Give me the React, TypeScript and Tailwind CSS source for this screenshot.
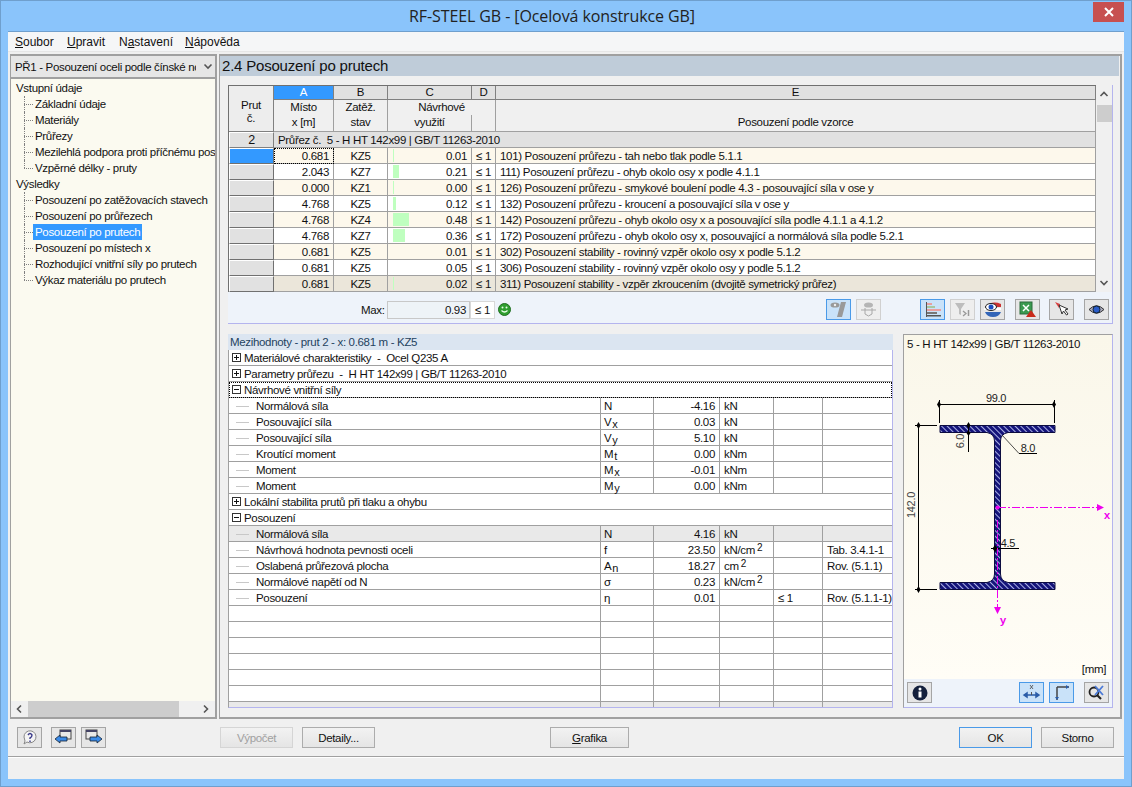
import type { ReactNode } from "react";

const font = "font-['Liberation_Sans',Arial,sans-serif]";

const treeInput = ["Základní údaje", "Materiály", "Průřezy", "Mezilehlá podpora proti příčnému posunu", "Vzpěrné délky - pruty"];
const treeResults = [
  "Posouzení po zatěžovacích stavech",
  "Posouzení po průřezech",
  "Posouzení po prutech",
  "Posouzení po místech x",
  "Rozhodující vnitřní síly po prutech",
  "Výkaz materiálu po prutech",
];

const rows = [
  { x: "0.681", lc: "KZ5", v: "0.01", bar: 1, text: "101) Posouzení průřezu - tah nebo tlak podle 5.1.1" },
  { x: "2.043", lc: "KZ7", v: "0.21", bar: 6, text: "111) Posouzení průřezu - ohyb okolo osy x podle 4.1.1" },
  { x: "0.000", lc: "KZ1", v: "0.00", bar: 1, text: "126) Posouzení průřezu - smykové boulení podle 4.3 - posouvající síla v ose y" },
  { x: "4.768", lc: "KZ5", v: "0.12", bar: 3, text: "132) Posouzení průřezu - kroucení a posouvající síla v ose y" },
  { x: "4.768", lc: "KZ4", v: "0.48", bar: 16, text: "142) Posouzení průřezu - ohyb okolo osy x a posouvající síla podle 4.1.1 a 4.1.2" },
  { x: "4.768", lc: "KZ7", v: "0.36", bar: 12, text: "172) Posouzení průřezu - ohyb okolo osy x, posouvající a normálová síla podle 5.2.1" },
  { x: "0.681", lc: "KZ5", v: "0.01", bar: 0, text: "302) Posouzení stability - rovinný vzpěr okolo osy x podle 5.1.2" },
  { x: "0.681", lc: "KZ5", v: "0.05", bar: 0, text: "306) Posouzení stability - rovinný vzpěr okolo osy y podle 5.1.2" },
  { x: "0.681", lc: "KZ5", v: "0.02", bar: 1, text: "311) Posouzení stability - vzpěr zkroucením (dvojitě symetrický průřez)" },
];

const rowBg = ["bg-[#fdf8ec]", "bg-white", "bg-[#fdf8ec]", "bg-white", "bg-[#fdf8ec]", "bg-white", "bg-[#fdf8ec]", "bg-white", "bg-[#ebe6da]"];

const grid1 = "grid h-4 grid-cols-[45px_60px_54px_84px_24px_600px] grid-rows-[16px] leading-4";
const grid2 = "grid grid-cols-[372px_53px_66px_54px_49px_69px] grid-rows-[15px]";

type Detail =
  | { kind: "group"; open: boolean; label: string; focus?: boolean }
  | { kind: "row"; label: string; sym?: ReactNode; val?: string; unit?: ReactNode; le?: string; ref?: string; shade?: boolean }
  | { kind: "empty"; shade?: boolean };

const S = ({ a, b }: { a: string; b: string }) => (
  <span>
    {a}
    <span className="relative top-[2px] ml-[1px] text-[11px] leading-none">{b}</span>
  </span>
);
const Sq = ({ a }: { a: string }) => (
  <span>
    {a}
    <span className="relative top-[-3px] ml-[2px] text-[10px] leading-none">2</span>
  </span>
);

const details: Detail[] = [
  { kind: "group", open: false, label: "Materiálové charakteristiky  -  Ocel Q235 A" },
  { kind: "group", open: false, label: "Parametry průřezu  -  H HT 142x99 | GB/T 11263-2010" },
  { kind: "group", open: true, label: "Návrhové vnitřní síly", focus: true },
  { kind: "row", label: "Normálová síla", sym: "N", val: "-4.16", unit: "kN" },
  { kind: "row", label: "Posouvající síla", sym: <S a="V" b="x" />, val: "0.03", unit: "kN" },
  { kind: "row", label: "Posouvající síla", sym: <S a="V" b="y" />, val: "5.10", unit: "kN" },
  { kind: "row", label: "Kroutící moment", sym: <S a="M" b="t" />, val: "0.00", unit: "kNm" },
  { kind: "row", label: "Moment", sym: <S a="M" b="x" />, val: "-0.01", unit: "kNm" },
  { kind: "row", label: "Moment", sym: <S a="M" b="y" />, val: "0.00", unit: "kNm" },
  { kind: "group", open: false, label: "Lokální stabilita prutů při tlaku a ohybu" },
  { kind: "group", open: true, label: "Posouzení" },
  { kind: "row", label: "Normálová síla", sym: "N", val: "4.16", unit: "kN", shade: true },
  { kind: "row", label: "Návrhová hodnota pevnosti oceli", sym: "f", val: "23.50", unit: <Sq a="kN/cm" />, ref: "Tab. 3.4.1-1" },
  { kind: "row", label: "Oslabená průřezová plocha", sym: <S a="A" b="n" />, val: "18.27", unit: <Sq a="cm" />, ref: "Rov. (5.1.1)" },
  { kind: "row", label: "Normálové napětí od N", sym: "σ", val: "0.23", unit: <Sq a="kN/cm" /> },
  { kind: "row", label: "Posouzení", sym: "η", val: "0.01", le: "≤ 1", ref: "Rov. (5.1.1-1)" },
  { kind: "empty" },
  { kind: "empty" },
  { kind: "empty" },
  { kind: "empty" },
  { kind: "empty" },
  { kind: "empty" },
  { kind: "empty", shade: true },
];

const Dots = ({ last }: { last?: boolean }) => (
  <span className="ml-[13px] flex h-4 w-[9px] shrink-0 flex-col">
    <span className="h-2 w-0 border-l border-dotted border-[#808080]" />
    <span className="w-[9px] border-t border-dotted border-[#808080]" />
    {!last && <span className="h-2 w-0 border-l border-dotted border-[#808080]" />}
  </span>
);

function Tool({ active, disabled, children, className = "" }: { active?: boolean; disabled?: boolean; children: ReactNode; className?: string }) {
  const tone = active ? "border-[#4a9ae8] bg-[#c9e2f9]" : disabled ? "border-[#d0d0d0] bg-[#eeeeee]" : "border-[#a5a5a5] bg-[#e6e6e6]";
  return <div className={`flex h-[21px] w-[25px] shrink-0 items-center justify-center border ${tone} ${className}`}>{children}</div>;
}

function Button({ children, className = "", disabled, active }: { children: ReactNode; className?: string; disabled?: boolean; active?: boolean }) {
  return (
    <div
      className={`flex h-[21px] shrink-0 items-center justify-center border bg-gradient-to-b from-[#f2f2f2] to-[#e5e5e5] ${
        disabled ? "border-[#d5d5d5] text-[#a0a0a0]" : active ? "border-[#4a9ae8]" : "border-[#acacac]"
      } ${className}`}
    >
      {children}
    </div>
  );
}

const PlusBox = ({ open }: { open: boolean }) => (
  <svg width="9" height="9" viewBox="0 0 9 9" className="mt-[3px] mr-[3px] ml-[3px] shrink-0">
    <rect x="0.5" y="0.5" width="8" height="8" fill="#fff" stroke="#333" />
    <path d={open ? "M2 4.5h5" : "M2 4.5h5M4.5 2v5"} stroke="#111" />
  </svg>
);

function IBeam() {
  const section =
    "M940 425.5H1055V432.5H1008Q1000.5 434 1000.5 441V574Q1000.5 581 1008 582.5H1055V589.5H940V582.5H987Q994.5 581 994.5 574V441Q994.5 434 987 432.5H940Z";
  return (
    <svg viewBox="904 352 208 309" className="h-[309px] w-[208px] shrink-0">
      <defs>
        <pattern id="hatch" width="4" height="4" patternUnits="userSpaceOnUse" patternTransform="rotate(-45)">
          <rect width="4" height="4" fill="#14147a" />
          <rect width="1" height="4" fill="#aab0e4" />
        </pattern>
      </defs>
      <path d={section} fill="url(#hatch)" stroke="#0c0c40" strokeWidth="1" />
      <g stroke="#000" strokeWidth="1" fill="none" shapeRendering="crispEdges">
        <path d="M939 404.5H1054M939 400V423M1054 400V423" />
        <path d="M918.5 425V590M915 425.5H937M915 589.5H937" />
        <path d="M968.5 423V452" />
        <path d="M1019 453.5H1037" />
        <path d="M991 548.5H1019" />
      </g>
      <path d="M1002 435L1019 453.5" stroke="#222" strokeWidth="0.8" />
      <g fill="#000">
        <path d="M939 401l2 3.5-2 3.5-2-3.5zM1054 401l2 3.5-2 3.5-2-3.5zM918.5 422l2 3.5-2 3.5-2-3.5zM918.5 586l2 3.5-2 3.5-2-3.5zM968.5 422l2 3.5-2 3.5-2-3.5zM968.5 430l2 3-2 3-2-3zM995 545l2.5 3.5-2.5 3.5-2.5-3.5z" />
      </g>
      <g fontFamily="'Liberation Sans',Arial,sans-serif" fontSize="11" letterSpacing="-0.3" fill="#1b1b1b">
        <text x="996" y="402" textAnchor="middle">99.0</text>
        <text x="1028" y="452" textAnchor="middle">8.0</text>
        <text x="1008" y="547" textAnchor="middle">4.5</text>
        <text transform="translate(964 441) rotate(-90)" textAnchor="middle" fill="#444">6.0</text>
        <text transform="translate(915 505) rotate(-90)" textAnchor="middle" fill="#444">142.0</text>
      </g>
      <g stroke="#ee00ee" strokeWidth="1" fill="none">
        <path d="M998 507.5H1098" strokeDasharray="8 2 2 2" />
        <path d="M997.5 520V612" strokeDasharray="8 2 2 2" />
      </g>
      <g fill="#ee00ee">
        <circle cx="997.5" cy="507.5" r="2" />
        <path d="M1097 504l7 3.5-7 3.5zM994 607h7l-3.5 7z" />
        <text x="1107" y="519" textAnchor="middle" fontFamily="'Liberation Mono',monospace" fontWeight="700" fontSize="11">x</text>
        <text x="1003" y="624" textAnchor="middle" fontFamily="'Liberation Mono',monospace" fontWeight="700" fontSize="11">y</text>
      </g>
    </svg>
  );
}

export default function App() {
  return (
    <div className={`${font} flex h-[787px] w-[1132px] flex-col overflow-hidden border border-[#6f9fcd] bg-[#8ac4fb] text-[11.5px] leading-4 tracking-[-0.33px] text-[#111]`}>
      {/* title bar */}
      <div className="flex h-[30px] shrink-0 items-center">
        <div className="flex-1 pl-[10px] text-center font-['Open_Sans',sans-serif] text-[16px] tracking-[-0.1px] text-[#222]">RF-STEEL GB - [Ocelová konstrukce GB]</div>
        <div className="mr-[7px] mb-[9px] flex h-[20px] w-[31px] items-center justify-center bg-[#c75050]">
          <svg width="10" height="10" viewBox="0 0 10 10">
            <path d="M1 1l8 8M9 1l-8 8" stroke="#fff" strokeWidth="2" />
          </svg>
        </div>
      </div>

      <div className="mx-[7px] flex h-[748px] flex-col border-t border-[#6f9fcd] bg-[#f0f0f0]">
        {/* menu */}
        <div className="flex h-[19px] shrink-0 items-center gap-[14px] bg-[#f5f6f7] pl-[7px] text-[12px] tracking-normal">
          <span className="w-[38px]"><u>S</u>oubor</span>
          <span className="w-[38px]"><u>U</u>pravit</span>
          <span className="w-[52px]">N<u>a</u>stavení</span>
          <span><u>N</u>ápověda</span>
        </div>

        <div className="flex h-[668px] shrink-0 border-t border-[#e6e6e6] pt-[2px]">
          {/* left panel */}
          <div className="ml-[2px] flex w-[207px] shrink-0 flex-col border-t-2 border-r-2 border-b-2 border-l border-[#a0a0a0]">
            <div className="flex h-[23px] shrink-0 items-center justify-between border-b-2 border-[#a0a0a0] bg-[#e6e6e6] pr-[2px] pl-[4px]">
              <span className="w-[181px] overflow-hidden whitespace-nowrap">PŘ1 - Posouzení oceli podle čínské normy</span>
              <svg width="10" height="8" viewBox="0 0 10 8"><path d="M1.5 1.5L5 5l3.500-3.500" stroke="#555" strokeWidth="1.6" fill="none" /></svg>
            </div>
            <div className="flex-1 overflow-hidden bg-[#fbfaf0] pt-[1px]">
              <div className="pl-[5px]">Vstupní údaje</div>
              {treeInput.map((t, i) => (
                <div key={t} className="flex h-4 whitespace-nowrap">
                  <Dots last={i === treeInput.length - 1} />
                  <span className="px-[2px]">{t}</span>
                </div>
              ))}
              <div className="pl-[5px]">Výsledky</div>
              {treeResults.map((t, i) => (
                <div key={t} className="flex h-4 whitespace-nowrap">
                  <Dots last={i === treeResults.length - 1} />
                  <span className={`px-[2px] ${t === "Posouzení po prutech" ? "bg-[#3399ff] text-white" : ""}`}>{t}</span>
                </div>
              ))}
            </div>
            <div className="flex h-[16px] shrink-0 items-center bg-[#f0f0f0]">
              <svg width="17" height="10" viewBox="0 0 17 10"><path d="M10 1.5L6.500 5l3.500 3.500" stroke="#555" strokeWidth="1.6" fill="none" /></svg>
              <div className="h-full w-[151px] bg-[#cdcdcd]" />
              <svg width="17" height="10" viewBox="0 0 17 10" className="mr-[1px] ml-auto"><path d="M7 1.5L10.500 5 7 8.500" stroke="#555" strokeWidth="1.6" fill="none" /></svg>
            </div>
          </div>

          {/* right panel */}
          <div className="ml-[2px] flex w-[903px] shrink-0 flex-col border-t-2 border-r-2 border-b-2 border-l border-[#a0a0a0] bg-[#f0f0f0]">
            <div className="mr-[1px] h-[20px] shrink-0 bg-[#bfccd9] pl-[2px] text-[15px] leading-5 tracking-[-0.2px]">2.4 Posouzení po prutech</div>

            <div className="mt-[9px] ml-[8px] flex w-[885px] shrink-0 flex-col border-r border-b border-[#b4b4ee]">
              <div className="flex">
                {/* upper table */}
                <div className="w-[868px] shrink-0 border-t border-l border-[#707070]">
                  <div className="grid grid-cols-[45px_60px_54px_84px_24px_600px]">
                    <div className="row-span-2 flex flex-col items-center border-r border-b border-[#808080] bg-[#ededed] pt-[13px] leading-[13px]">
                      <span>Prut</span>
                      <span>č.</span>
                    </div>
                    {["A", "B", "C", "D", "E"].map((c) => (
                      <div key={c} className={`h-[14px] border-r border-b border-[#808080] text-center leading-[13px] ${c === "A" ? "bg-[#3399ff] text-white" : "bg-[#e1e1e1]"}`}>
                        {c}
                      </div>
                    ))}
                    <div className="h-[32px] border-r border-b border-[#a0a0a0] bg-[#f0f0f0] text-center leading-[15px]">Místo<br />x [m]</div>
                    <div className="border-r border-b border-[#a0a0a0] bg-[#f0f0f0] text-center leading-[15px]">Zatěž.<br />stav</div>
                    <div className="col-span-2 flex flex-col border-r border-b border-[#a0a0a0] bg-[#f0f0f0] leading-[15px]">
                      <div className="text-center">Návrhové</div>
                      <div className="h-4 w-[84px] border-r border-[#a0a0a0] text-center">využití</div>
                    </div>
                    <div className="border-r border-b border-[#a0a0a0] bg-[#f0f0f0] pt-[15px] text-center leading-[15px]">Posouzení podle vzorce</div>
                  </div>
                  <div className={grid1}>
                    <div className="flex items-center justify-center border border-t-white border-r-[#808080] border-b-[#808080] border-l-white bg-[#e1e1e1] text-[12.5px]">2</div>
                    <div className="col-span-5 border-r border-b border-[#a0a0a0] bg-[#e1e1e1] pl-[4px] whitespace-pre">Průřez č.  5 - H HT 142x99 | GB/T 11263-2010</div>
                  </div>
                  {rows.map((r, i) => (
                    <div key={r.text} className={grid1}>
                      <div className={`border border-t-white border-r-[#707070] border-b-[#707070] border-l-white ${i === 0 ? "bg-[#3399ff]" : "bg-[#e1e1e1]"}`} />
                      <div className={`border-r border-b border-[#a0a0a0] pr-[4px] text-right ${rowBg[i]} ${i === 0 ? "outline-1 -outline-offset-1 outline-black outline-dotted" : ""}`}>{r.x}</div>
                      <div className={`border-r border-b border-[#a0a0a0] text-center ${rowBg[i]}`}>{r.lc}</div>
                      <div className={`flex items-stretch justify-between border-r border-b border-[#a0a0a0] pr-[4px] pl-[5px] ${rowBg[i]}`}>
                        <span className="my-[1px] bg-[#bfffbf]" style={{ width: r.bar }} />
                        <span>{r.v}</span>
                      </div>
                      <div className={`border-r border-b border-[#a0a0a0] text-center ${rowBg[i]}`}>≤ 1</div>
                      <div className={`overflow-hidden border-r border-b border-[#a0a0a0] pl-[4px] whitespace-nowrap ${rowBg[i]}`}>{r.text}</div>
                    </div>
                  ))}
                </div>
                {/* scrollbar */}
                <div className="flex h-[207px] w-[16px] shrink-0 flex-col items-center">
                  <svg width="10" height="14" viewBox="0 0 10 14" className="mt-[2px]"><path d="M1.5 9L5 5.5 8.500 9" stroke="#555" strokeWidth="1.6" fill="none" /></svg>
                  <div className="mt-[4px] h-[17px] w-[15px] bg-[#cdcdcd]" />
                  <div className="flex-1" />
                  <svg width="10" height="10" viewBox="0 0 10 10" className="mb-[4px]"><path d="M1.5 3L5 6.500 8.500 3" stroke="#555" strokeWidth="1.6" fill="none" /></svg>
                </div>
              </div>

              {/* max row */}
              <div className="flex h-[31px] items-center bg-[#eef3fa] pt-[4px]">
                <span className="ml-[133px] w-[26px]">Max:</span>
                <div className="h-[18px] w-[83px] border border-[#c8c8c8] bg-[#eef3f7] pr-[3px] text-right">0.93</div>
                <div className="h-[18px] w-[25px] border border-[#d8d8d8] bg-white text-center">≤ 1</div>
                <svg width="13" height="13" viewBox="0 0 13 13" className="ml-[3px] shrink-0">
                  <circle cx="6.500" cy="6.500" r="6" fill="#2f9e2f" stroke="#1f6e1f" />
                  <path d="M3.500 7.500q3 3 6 0" stroke="#e8ffe8" strokeWidth="1.2" fill="none" />
                  <circle cx="4.500" cy="4.500" r="1" fill="#e8ffe8" />
                  <circle cx="8.500" cy="4.500" r="1" fill="#e8ffe8" />
                </svg>
                <Tool active className="ml-[315px]">
                  <svg width="19" height="17" viewBox="0 0 19 17"><ellipse cx="6" cy="4" rx="4.500" ry="2.600" fill="#999" /><circle cx="6" cy="4" r="1.200" fill="#eee" /><path d="M12 1h5l-4 15H8z" fill="#999" /></svg>
                </Tool>
                <Tool disabled className="ml-[5px]">
                  <svg width="19" height="17" viewBox="0 0 19 17"><ellipse cx="9.500" cy="4" rx="4.500" ry="2.600" fill="#b5b5b5" /><path d="M2 9h15M6 7v6M13 7v6M6 13l3.500 2 3.500-2" stroke="#a8a8a8" fill="none" /></svg>
                </Tool>
                <Tool active className="ml-[39px]">
                  <svg width="19" height="17" viewBox="0 0 19 17"><path d="M3.500 1v15" stroke="#555" /><rect x="4" y="2" width="5" height="2" fill="#e8a0a0" /><rect x="4" y="5" width="8" height="2" fill="#a8c8a0" /><rect x="4" y="8" width="14" height="2" fill="#e8a0a0" /><rect x="4" y="11" width="10" height="2" fill="#777" /><rect x="4" y="14" width="14" height="1.500" fill="#555" /></svg>
                </Tool>
                <Tool disabled className="ml-[5px]">
                  <svg width="19" height="17" viewBox="0 0 19 17"><path d="M2 2h10L8 8v6L6 13V8z" fill="#bdbdbd" /><path d="M10 10l3 2.500-3 2.500" stroke="#999" fill="none" strokeWidth="1.300" /><path d="M15.500 9v6" stroke="#999" strokeWidth="1.500" /></svg>
                </Tool>
                <Tool className="ml-[5px]">
                  <svg width="19" height="17" viewBox="0 0 19 17"><path d="M2 6q7-7 16-3v3H2z" fill="#c33" /><path d="M1 7h17v2H1z" fill="#fff" /><path d="M2 11h16q-2 5-8 5t-8-5z" fill="#3265b8" /><ellipse cx="8" cy="6" rx="5.500" ry="3.500" fill="#fff" stroke="#222" /><circle cx="8" cy="6" r="2.500" fill="#1a4fc0" /></svg>
                </Tool>
                <Tool className="ml-[10px]">
                  <svg width="19" height="17" viewBox="0 0 19 17"><rect x="2" y="1" width="12" height="12" fill="#3a9a50" stroke="#2a6a3a" /><path d="M5 4l6 6M11 4l-6 6" stroke="#fff" strokeWidth="1.500" /><path d="M13 9l5 7H8z" fill="#c92a1a" /></svg>
                </Tool>
                <Tool className="ml-[9px]">
                  <svg width="19" height="17" viewBox="0 0 19 17"><path d="M3 1l5 2-1 4z" fill="#d94040" /><path d="M7 4l3 9 1.500-3 3 4 1.500-1-3-4 3-1z" fill="#fff" stroke="#333" /></svg>
                </Tool>
                <Tool className="ml-[10px]">
                  <svg width="19" height="17" viewBox="0 0 19 17"><path d="M2 8.500Q9.500 1 17 8.500 9.500 16 2 8.500z" fill="#aab" stroke="#333" /><circle cx="9.500" cy="8.500" r="3.500" fill="#2a5cc8" stroke="#123" /></svg>
                </Tool>
              </div>
            </div>

            <div className="mt-[10px] ml-[8px] flex">
              {/* lower table */}
              <div className="flex h-[374px] w-[665px] shrink-0 flex-col">
                <div className="h-4 shrink-0 bg-[#dbe5f1] pl-[2px] text-[#24425f]">Mezihodnoty - prut 2 - x: 0.681 m - KZ5</div>
                <div className="flex-1 overflow-hidden border-r border-b border-l border-r-[#b4b4ee] border-b-[#b4b4ee] border-l-[#a0a0a0] bg-white">
                  {details.map((d, i) => {
                    if (d.kind === "group") {
                      return (
                        <div key={i} className={`flex h-4 items-start border-b border-[#a0a0a0] whitespace-pre ${d.focus ? "outline-1 -outline-offset-1 outline-black outline-dotted" : ""}`}>
                          <PlusBox open={d.open} />
                          {d.label}
                        </div>
                      );
                    }
                    if (d.kind === "empty") {
                      return (
                        <div key={i} className={`${grid2} h-4 border-b border-[#a0a0a0] ${d.shade ? "bg-[#e9e9e9]" : ""}`}>
                          {[0, 1, 2, 3, 4].map((c) => <div key={c} className="border-r border-[#a0a0a0]" />)}
                        </div>
                      );
                    }
                    return (
                      <div key={i} className={`${grid2} h-4 border-b border-[#a0a0a0] leading-4 whitespace-nowrap ${d.shade ? "bg-[#e9e9e9]" : ""}`}>
                        <div className="flex items-start border-r border-[#a0a0a0]">
                          <span className="mt-[8px] mr-[7px] ml-[7px] w-[13px] border-t border-[#c8c8c8]" />
                          {d.label}
                        </div>
                        <div className="border-r border-[#a0a0a0] pl-[3px]">{d.sym}</div>
                        <div className="border-r border-[#a0a0a0] pr-[4px] text-right">{d.val}</div>
                        <div className="border-r border-[#a0a0a0] pl-[4px]">{d.unit}</div>
                        <div className="border-r border-[#a0a0a0] pl-[4px]">{d.le}</div>
                        <div className="overflow-hidden pl-[4px]">{d.ref}</div>
                      </div>
                    );
                  })}
                </div>
              </div>

              {/* graphic */}
              <div className="ml-[10px] flex h-[374px] w-[210px] shrink-0 flex-col border-t border-r border-b border-l border-t-[#a0a0a0] border-r-[#b4b4ee] border-b-[#b4b4ee] border-l-[#a0a0a0]">
                <div className="flex flex-1 flex-col bg-gradient-to-b from-[#faf7ea] to-[#fffdf6]">
                  <div className="h-[17px] shrink-0 pt-[1px] pl-[3px]">5 - H HT 142x99 | GB/T 11263-2010</div>
                  <IBeam />
                  <div className="pr-[6px] text-right">[mm]</div>
                </div>
                <div className="flex h-[28px] shrink-0 items-start bg-[#eef3fa] pt-[3px]">
                  <Tool className="ml-[3px]">
                    <svg width="16" height="16" viewBox="0 0 16 16"><circle cx="8" cy="8" r="7.500" fill="#14203c" /><circle cx="8" cy="4" r="1.500" fill="#fff" /><rect x="6.500" y="6.500" width="3" height="6" fill="#fff" /></svg>
                  </Tool>
                  <Tool active className="ml-[87px]">
                    <svg width="19" height="17" viewBox="0 0 19 17"><path d="M2 11h15M2 11l3-2v4zM17 11l-3-2v4z" stroke="#2a5ca8" strokeWidth="1.500" fill="#2a5ca8" /><path d="M9.500 8V11" stroke="#555" /><path d="M8 1l3 4M11 1L8 5" stroke="#444" strokeWidth="0.800" /></svg>
                  </Tool>
                  <Tool active className="ml-[5px]">
                    <svg width="19" height="17" viewBox="0 0 19 17"><path d="M5 3v13M5 3h12" stroke="#444" strokeWidth="1.500" /><path d="M17 3l-3-2v4zM5 16l-2-3h4z" fill="#2a5ca8" /></svg>
                  </Tool>
                  <Tool className="ml-[10px]">
                    <svg width="19" height="17" viewBox="0 0 19 17"><circle cx="7" cy="8" r="4.500" fill="none" stroke="#222" strokeWidth="1.800" /><path d="M10 11l4 4" stroke="#222" strokeWidth="2.200" /><path d="M8 2l8 9M16 2l-8 9" stroke="#4a7ad8" strokeWidth="1.800" /></svg>
                  </Tool>
                </div>
              </div>
            </div>
          </div>
        </div>

        {/* buttons */}
        <div className="flex h-[38px] shrink-0 items-center border-b border-[#a0a0a0] pl-[9px]">
          <Tool>
            <svg width="18" height="17" viewBox="0 0 18 17"><path d="M3 8a6 6 0 1 1 3 5l-3 2 1-3z" fill="#f4f4f4" stroke="#888" /><path d="M7 6q2-3 4 0 0 2-2 3v1M9 11.500v1.500" stroke="#3a3a8a" strokeWidth="1.400" fill="none" /></svg>
          </Tool>
          <Tool className="ml-[9px]">
            <svg width="19" height="17" viewBox="0 0 19 17"><rect x="6" y="1" width="11" height="9" fill="#e8e8e8" stroke="#444" /><rect x="6" y="1" width="11" height="2" fill="#446" /><path d="M1 10l5-4v2h7v4H6v2z" fill="#3a8ae8" stroke="#123" strokeWidth="0.800" /></svg>
          </Tool>
          <Tool className="ml-[5px]">
            <svg width="19" height="17" viewBox="0 0 19 17"><rect x="2" y="1" width="11" height="9" fill="#e8e8e8" stroke="#444" /><rect x="2" y="1" width="11" height="2" fill="#446" /><path d="M18 10l-5-4v2H6v4h7v2z" fill="#3a8ae8" stroke="#123" strokeWidth="0.800" /></svg>
          </Tool>
          <Button disabled className="ml-[114px] w-[73px]">Výpočet</Button>
          <Button className="ml-[9px] w-[73px]">Detaily...</Button>
          <Button className="ml-[175px] w-[79px]"><span><u>G</u>rafika</span></Button>
          <Button active className="ml-[330px] w-[73px]">OK</Button>
          <Button className="ml-[9px] w-[73px]">Storno</Button>
        </div>
        <div className="flex-1 border-t border-white bg-[#f0f0f0]" />
      </div>
    </div>
  );
}
